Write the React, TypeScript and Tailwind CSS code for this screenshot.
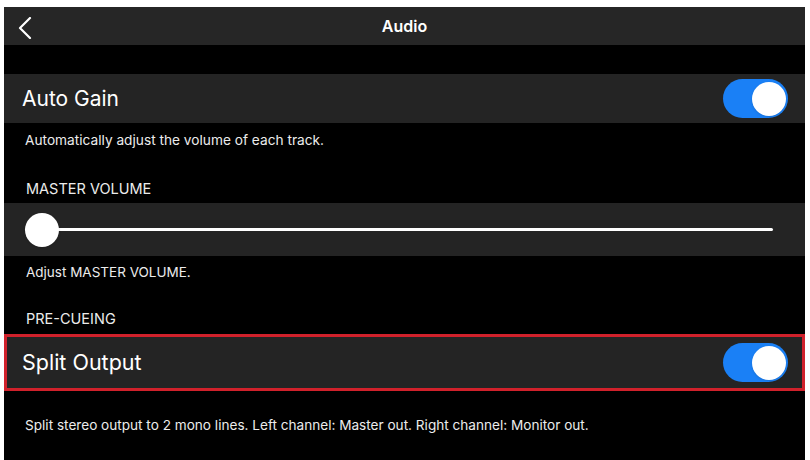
import { useState } from "react";

function Toggle({ on, onClick }: { on: boolean; onClick: () => void }) {
  return (
    <button
      onClick={onClick}
      className={`flex h-[39px] w-[65px] shrink-0 items-center rounded-full px-[2px] ${
        on ? "justify-end bg-[#1a80f6]" : "justify-start bg-[#3a3a3c]"
      }`}
    >
      <span className="block h-[34px] w-[34px] rounded-full bg-white shadow" />
    </button>
  );
}

export default function App() {
  const [autoGain, setAutoGain] = useState(true);
  const [split, setSplit] = useState(true);
  const volume = 0;

  return (
    <div className="h-[460px] w-[810px] bg-white pt-[7px] pl-[4px] pr-[5px] font-['Inter','Liberation_Sans',sans-serif]">
      <div className="flex h-full flex-col bg-black text-white">
        {/* Nav bar */}
        <div className="relative flex h-[38px] shrink-0 items-center justify-center bg-[#262626]">
          <button className="absolute left-[13px] top-[10px] text-white">
            <svg width="16" height="22" viewBox="0 0 16 22" fill="none">
              <polyline
                points="13,1 3,11 13,21"
                stroke="currentColor"
                strokeWidth="2.2"
                strokeLinecap="round"
                strokeLinejoin="round"
              />
            </svg>
          </button>
          <span className="text-[16px] font-semibold">Audio</span>
        </div>

        <div className="h-[29px] shrink-0" />

        {/* Auto Gain */}
        <div className="flex h-[49px] shrink-0 items-center justify-between bg-[#242424] pl-[18px] pr-[17px]">
          <span className="text-[21px]">Auto Gain</span>
          <Toggle on={autoGain} onClick={() => setAutoGain(!autoGain)} />
        </div>
        <div className="flex h-[34px] shrink-0 items-center pl-[21px] text-[13.7px] text-[#ececec]">
          Automatically adjust the volume of each track.
        </div>

        <div className="flex h-[46px] shrink-0 items-end pb-[3px] pl-[22px] text-[14.5px] text-[#ececec]">
          MASTER VOLUME
        </div>

        {/* Master volume slider */}
        <div className="flex h-[53px] shrink-0 items-center bg-[#242424] pl-[21px] pr-[32px]">
          <div className="relative flex h-[34px] w-full items-center">
            <div className="h-[3px] w-full rounded-full bg-white" />
            <div
              className="absolute top-0 h-[34px] w-[34px] rounded-full bg-white shadow"
              style={{ left: `calc(${volume}% - ${volume * 0.34}px)` }}
            />
          </div>
        </div>
        <div className="flex h-[32px] shrink-0 items-center pl-[22px] text-[13.5px] text-[#ececec]">
          Adjust MASTER VOLUME.
        </div>

        <div className="flex h-[46px] shrink-0 items-end pb-[4px] pl-[22px] text-[14.5px] text-[#ececec]">
          PRE-CUEING
        </div>

        {/* Split Output */}
        <div className="flex h-[57px] shrink-0 items-center justify-between border-[3px] border-[#d0212b] bg-[#242424] pl-[15px] pr-[14px]">
          <span className="text-[21.5px]">Split Output</span>
          <Toggle on={split} onClick={() => setSplit(!split)} />
        </div>
        <div className="flex h-[68px] shrink-0 items-center pl-[21px] text-[13.6px] text-[#ececec]">
          Split stereo output to 2 mono lines. Left channel: Master out. Right channel: Monitor out.
        </div>
      </div>
    </div>
  );
}
